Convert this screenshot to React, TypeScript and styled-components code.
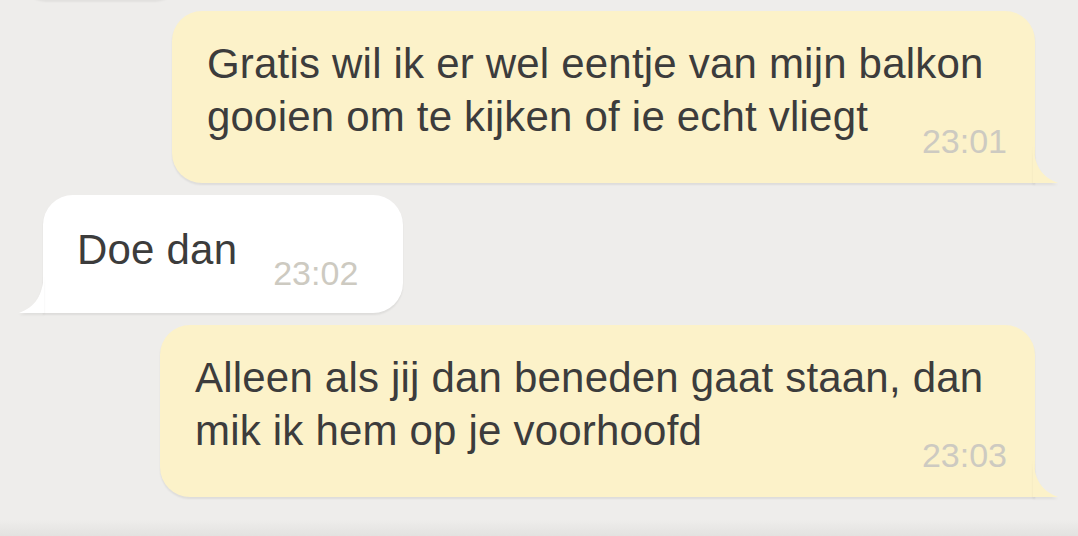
import styled, { createGlobalStyle } from 'styled-components';

const GlobalStyle = createGlobalStyle`
  html, body {
    margin: 0;
    padding: 0;
    background: #eeedeb;
    overflow: hidden;
  }
`;

type Side = 'in' | 'out';

type MessageProps = {
  side: Side;
  lines: string[];
  time: string;
  width: number;
  inline?: boolean;
};

const Tail = ({ side }: { side: Side }) => {
  const color = side === 'out' ? '#fcf2c9' : '#ffffff';
  return (
    <TailSvg $side={side} width="26" height="40" viewBox="0 0 26 40">
      {side === 'out' ? (
        <path d="M0 0 C1 23 9 34 25 40 L0 40 Z" fill={color} />
      ) : (
        <path d="M26 0 C25 23 17 34 1 40 L26 40 Z" fill={color} />
      )}
    </TailSvg>
  );
};

const Message = ({ side, lines, time, width, inline }: MessageProps) => {
  return (
    <Row $side={side}>
      <Bubble $side={side} $width={width} $inline={inline}>
        <BodyDiv>
          {lines.map((line) => (
            <LineSpan key={line}>{line}</LineSpan>
          ))}
        </BodyDiv>
        <TimeSpan $inline={inline}>{time}</TimeSpan>
        <Tail side={side} />
      </Bubble>
    </Row>
  );
};

const App = () => {
  return (
    <ChatSec>
      <GlobalStyle />
      <CutBubbleDiv />
      <Message
        side="out"
        width={863}
        lines={['Gratis wil ik er wel eentje van mijn balkon', 'gooien om te kijken of ie echt vliegt']}
        time="23:01"
      />
      <Message side="in" width={360} inline lines={['Doe dan']} time="23:02" />
      <Message
        side="out"
        width={875}
        lines={['Alleen als jij dan beneden gaat staan, dan', 'mik ik hem op je voorhoofd']}
        time="23:03"
      />
      <BottomShadeDiv />
    </ChatSec>
  );
};

export default App;

const ChatSec = styled.section`
  height: 536px;
  display: flex;
  flex-direction: column;
  gap: 12px;
  background: #eeedeb;
  font-family: 'Liberation Sans', Arial, sans-serif;
`;

const CutBubbleDiv = styled.div`
  width: 165px;
  height: 40px;
  margin: -41px 0 0 18px;
  background: #ffffff;
  border-radius: 0 0 28px 28px;
  box-shadow: 0 3px 2px rgba(0, 0, 0, 0.05);
  flex-shrink: 0;
`;

const Row = styled.div<{ $side: Side }>`
  display: flex;
  justify-content: ${(p) => (p.$side === 'out' ? 'flex-end' : 'flex-start')};
  padding: ${(p) => (p.$side === 'out' ? '0 43px 0 0' : '0 0 0 43px')};
  flex-shrink: 0;
`;

const Bubble = styled.div<{ $side: Side; $width: number; $inline?: boolean }>`
  position: relative;
  box-sizing: border-box;
  width: ${(p) => p.$width}px;
  display: flex;
  flex-direction: ${(p) => (p.$inline ? 'row' : 'column')};
  align-items: ${(p) => (p.$inline ? 'flex-start' : 'stretch')};
  padding: ${(p) => (p.$inline ? '28px 42px 23px 34px' : '26px 28px 25px 35px')};
  background: ${(p) => (p.$side === 'out' ? '#fcf2c9' : '#ffffff')};
  border-radius: ${(p) => (p.$side === 'out' ? '30px 30px 0 30px' : '30px 30px 30px 0')};
  box-shadow: 0 2px 2px rgba(0, 0, 0, 0.07);
`;

const TailSvg = styled.svg<{ $side: Side }>`
  position: absolute;
  bottom: 0;
  ${(p) => (p.$side === 'out' ? 'right: -24px;' : 'left: -25px;')}
  filter: drop-shadow(0 2px 1px rgba(0, 0, 0, 0.06));
`;

const BodyDiv = styled.div`
  display: flex;
  flex-direction: column;
  align-items: flex-start;
`;

const LineSpan = styled.span`
  display: block;
  font-size: 42px;
  line-height: 53px;
  letter-spacing: 0.2px;
  color: #3c3c3c;
  white-space: nowrap;
`;

const TimeSpan = styled.span<{ $inline?: boolean }>`
  align-self: ${(p) => (p.$inline ? 'flex-start' : 'flex-end')};
  margin-top: ${(p) => (p.$inline ? '33px' : '-19px')};
  margin-left: ${(p) => (p.$inline ? '36px' : '0')};
  font-size: 34px;
  line-height: 34px;
  color: #cdcac1;
`;

const BottomShadeDiv = styled.div`
  margin-top: auto;
  height: 16px;
  background: linear-gradient(#eeedeb, #e3e2e0);
  flex-shrink: 0;
`;
